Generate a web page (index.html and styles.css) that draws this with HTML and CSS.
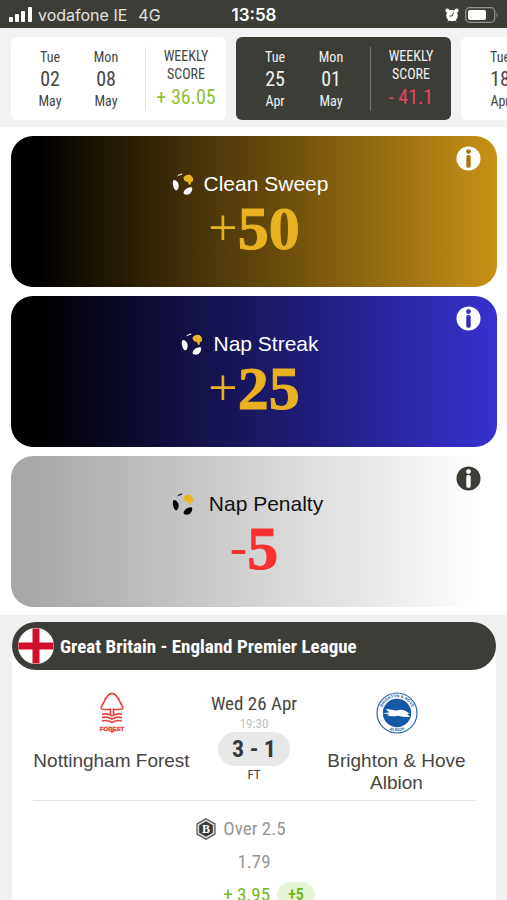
FILE: index.html
```html
<!DOCTYPE html>
<html lang="en">
<head>
<meta charset="utf-8">
<meta name="viewport" content="width=device-width, initial-scale=1">
<title>Weekly scores</title>
<link rel="stylesheet" href="styles.css">
</head>
<body>
<svg class="defs" aria-hidden="true">
  <symbol id="ball" viewBox="0 0 22 24">
    <path class="patch" d="M1.200 8.500C3 6.700 6 9.500 6.600 12.500C7 15.500 5.700 18.500 4 18.500C1.500 17 0 11.500 1.200 8.500Z"/>
    <path class="patch" d="M5 4.500C6.500 2.500 8.500 1.600 10.500 1.600L9.500 3C8 3 6.500 3.700 5 4.500Z"/>
    <path class="patch" d="M13 18C15 15.800 18 14.800 19.800 15.600C21 17 19.700 20.500 17.500 22C15.500 23 12.500 23 11.700 21.500C11.400 20.200 12 19 13 18Z"/>
    <path fill="#eab220" d="M11.700 5.500C12.700 3.200 16.500 2.200 18.800 3.300C21.200 4.700 21.800 8.200 20.600 9.600L18.800 10.200L18.900 12.300L17.300 13L15.800 10C13.300 9.800 11.200 8 11.700 5.500Z"/>
  </symbol>
  <symbol id="info" viewBox="0 0 26 26">
    <circle cx="13" cy="13" r="12.500" fill="currentColor"/>
    <circle class="cut" cx="13" cy="5.800" r="2.500"/>
    <rect class="cut" x="10.700" y="9.300" width="4.600" height="13.400" rx="2"/>
  </symbol>
</svg>
<div class="app">
  <div class="status">
    <div class="carrier">
      <svg class="signal" viewBox="0 0 24 15" aria-hidden="true"><g fill="#fff"><rect x="0" y="10" width="4" height="5" rx="1"/><rect x="6" y="7" width="4" height="8" rx="1"/><rect x="12" y="4" width="4" height="11" rx="1"/><rect x="19" y="0" width="4" height="15" rx="1"/></g></svg>
      <span>vodafone IE</span><span class="net">4G</span>
    </div>
    <time class="clock">13:58</time>
    <div class="power">
      <svg class="alarm" viewBox="0 0 14 14" aria-hidden="true"><g fill="#fff"><circle cx="7" cy="7.500" r="5.800"/><circle cx="2.400" cy="2.600" r="2"/><circle cx="11.600" cy="2.600" r="2"/><path d="M2 14l2-3 1 1zM12 14l-2-3-1 1z"/></g><path d="M8.500 4.500L7 8H4.500" fill="none" stroke="#3d3d38"/></svg>
      <svg class="battery" viewBox="0 0 34 16" aria-hidden="true"><rect x=".7" y=".7" width="29" height="14.600" rx="4" fill="none" stroke="#92928e" stroke-width="1.300"/><rect x="3" y="3" width="18" height="10" rx="2" fill="#fff"/><path d="M31.500 5.500q2 2.500 0 5z" fill="#92928e"/></svg>
    </div>
  </div>

  <nav class="weeks" aria-label="Weeks">
    <button class="week" type="button">
      <span class="day"><span>Tue</span><b>02</b><span>May</span></span>
      <span class="day"><span>Mon</span><b>08</b><span>May</span></span>
      <span class="total"><span>WEEKLY</span><span>SCORE</span><b class="up">+ 36.05</b></span>
    </button>
    <button class="week selected" type="button">
      <span class="day"><span>Tue</span><b>25</b><span>Apr</span></span>
      <span class="day"><span>Mon</span><b>01</b><span>May</span></span>
      <span class="total"><span>WEEKLY</span><span>SCORE</span><b class="down">- 41.1</b></span>
    </button>
    <button class="week" type="button">
      <span class="day"><span>Tue</span><b>18</b><span>Apr</span></span>
    </button>
  </nav>

  <section class="bonuses">
    <article class="bonus sweep">
      <h2><svg class="ball" aria-hidden="true"><use href="#ball"/></svg>Clean Sweep</h2>
      <p><span>+</span>50</p>
      <button class="info" type="button" aria-label="About Clean Sweep"><svg><use href="#info"/></svg></button>
    </article>
    <article class="bonus streak">
      <h2><svg class="ball" aria-hidden="true"><use href="#ball"/></svg>Nap Streak</h2>
      <p><span>+</span>25</p>
      <button class="info" type="button" aria-label="About Nap Streak"><svg><use href="#info"/></svg></button>
    </article>
    <article class="bonus penalty">
      <h2><svg class="ball" aria-hidden="true"><use href="#ball"/></svg>Nap Penalty</h2>
      <p><span>-</span>5</p>
      <button class="info" type="button" aria-label="About Nap Penalty"><svg><use href="#info"/></svg></button>
    </article>
  </section>

  <main class="fixtures">
    <section class="league">
      <h2 class="league-head">
        <svg class="flag" viewBox="0 0 36 36" aria-hidden="true"><circle cx="18" cy="18" r="18" fill="#fff"/><path d="M14.500 0.400h7v14.100h14.100v7H21.500v14.100h-7V21.500H.4v-7h14.100z" fill="#d0112b"/></svg>
        Great Britain - England Premier League
      </h2>
      <div class="match">
        <div class="team">
          <svg class="crest" viewBox="0 0 42 42" aria-hidden="true">
            <g fill="none" stroke="#e8453c" stroke-width="1.700" stroke-linejoin="round">
              <path d="M19 17.500H13C10 17.500 9.500 15.500 11 13.500C12 12 12.500 10.500 13.500 9C14 7 15 5.500 16.500 4.500C17 2.500 19 1.500 21 1.300C23 1.500 25 2.500 25.500 4.500C27 5.500 28 7 28.500 9C29.500 10.500 30 12 31 13.500C32.500 15.500 32 17.500 29 17.500H23"/>
              <path d="M19.500 16.500V22M22.500 16.500V22"/>
              <path d="M11 22.300q5-1.500 10 1.500q5-3 10-1.500M11 25.600q5-1.500 10 1.500q5-3 10-1.500M11 29q5-1.500 10 1.500q5-3 10-1.500"/>
            </g>
            <text x="21" y="38.500" class="crest-name">FOREST</text>
            <path d="M18.500 39h5L21 41z" fill="#e8453c"/>
          </svg>
          <span>Nottingham Forest</span>
        </div>
        <div class="result">
          <span class="date">Wed 26 Apr</span>
          <span class="time">19:30</span>
          <strong class="score">3 - 1</strong>
          <span class="state">FT</span>
        </div>
        <div class="team">
          <svg class="crest" viewBox="0 0 42 42" aria-hidden="true">
            <defs><path id="ring-top" d="M5.200 21a15.800 15.800 0 0 1 31.600 0"/><path id="ring-bottom" d="M2.800 21a18.200 18.200 0 0 0 36.400 0"/></defs>
            <circle cx="21" cy="21" r="20" fill="#fff" stroke="#2a66ae" stroke-width="1.200"/>
            <circle cx="21" cy="21" r="14.200" fill="#1558a8"/>
            <text class="ring"><textPath href="#ring-top" startOffset="50%">BRIGHTON &amp; HOVE</textPath></text>
            <text class="ring"><textPath href="#ring-bottom" startOffset="50%">ALBION</textPath></text>
            <path d="M5.500 21.300L13 20.500C12 19.500 11 18 9.500 16.800C14 17.500 17 18.500 21 18.500C25 17 29 18.300 31.500 20.300L34 21.500L31 22C32 23 33 23.500 34 25C29 25 25 24.500 22 23.700C18 24.500 14 24.500 10.500 23C12 22.800 13 22.500 13.500 22Z" fill="#fff"/>
          </svg>
          <span>Brighton &amp; Hove Albion</span>
        </div>
      </div>
      <div class="pick">
        <span class="market">
          <svg class="badge" viewBox="0 0 20 22" aria-hidden="true"><path d="M10 .8l9 5.100v10.200l-9 5.100-9-5.100V5.900z" fill="#d8d8d6" stroke="#55554f" stroke-width="1.200"/><path d="M10 3.300l6.800 3.900v7.600L10 18.700l-6.800-3.900V7.200z" fill="#3a3a36"/><text x="10" y="15" class="badge-letter">B</text></svg>
          Over 2.5
        </span>
        <span>1.79</span>
        <span class="gain">+ 3.95 <b>+5</b></span>
      </div>
    </section>
  </main>
</div>
</body>
</html>
```
FILE: styles.css
```css
* { box-sizing: border-box; }
body {
  margin: 0;
  background: #f0f0f0;
  color: #464643;
  font-family: "Roboto Condensed", "Liberation Sans Narrow", Roboto, sans-serif;
}
h2, p { margin: 0; font-weight: 400; }
button { font: inherit; color: inherit; border: 0; padding: 0; }
.defs { position: absolute; width: 0; height: 0; }
.app { height: 100vh; overflow: hidden; }

.status {
  display: grid;
  grid-template-columns: 1fr auto 1fr;
  align-items: center;
  height: 28px;
  padding: 1px 8px 0 9px;
  background: #3d3d38;
  color: #e2e2df;
  font-family: Inter, sans-serif;
  font-size: 16px;
}
.carrier { display: flex; align-items: center; gap: 5px; white-space: nowrap; }
.signal { width: 24px; height: 15px; }
.net { margin-left: 6px; }
.clock { font-weight: 600; font-size: 17px; color: #fff; }
.power { display: flex; align-items: center; justify-content: flex-end; gap: 6px; }
.alarm { width: 14px; height: 14px; }
.battery { width: 34px; height: 16px; }

.weeks {
  display: flex;
  gap: 10px;
  padding: 9px 0 7px 11px;
  background: #f2f2f2;
  overflow: hidden;
}
.week {
  flex: 0 0 215px;
  display: flex;
  align-items: center;
  height: 83px;
  padding: 0 0 0 11px;
  border-radius: 6px;
  background: #fff;
  font-size: 14px;
}
.week b { font-weight: 400; }
.day { width: 56px; display: flex; flex-direction: column; align-items: center; line-height: 20px; }
.day b { font-size: 20px; line-height: 24px; }
.total {
  flex: 1;
  display: flex;
  flex-direction: column;
  align-items: center;
  margin-left: 11px;
  border-left: 1px solid #dcdce4;
  line-height: 18px;
}
.total b { font-size: 20px; line-height: 28px; }
.selected { background: #3d3d38; color: #f0f0ee; }
.selected .total { border-color: #777773; }
.up { color: #87c232; }
.down { color: #e8455e; }

.bonuses { display: flex; flex-direction: column; gap: 9px; padding: 9px 10px 8px 11px; background: #fff; }
.bonus {
  position: relative;
  display: flex;
  flex-direction: column;
  align-items: center;
  height: 151px;
  padding-top: 34px;
  border-radius: 22px;
  color: #fff;
}
.bonus h2 {
  display: flex;
  align-items: center;
  gap: 10px;
  padding-right: 8px;
  font: 21px/28px "Liberation Sans", sans-serif;
}
.bonus p {
  display: flex;
  align-items: center;
  color: #eab220;
  font: bold 62px/60px "Liberation Serif", serif;
  -webkit-text-stroke: 1px currentColor;
}
.bonus p span { font-size: 52px; font-weight: 400; -webkit-text-stroke: 0; }
.ball { width: 22px; height: 24px; fill: #fff; }
.sweep { background: linear-gradient(90deg, #000 5%, #c89116); }
.streak { background: linear-gradient(90deg, #000 5%, #3731cf); }
.penalty { background: linear-gradient(90deg, #a8a8a8 5%, #fff 97%); color: #111; }
.penalty .ball { fill: #000; }
.bonus.penalty h2 { gap: 15px; padding-right: 13px; }
.penalty p { color: #fc3030; }
.info { position: absolute; top: 10px; right: 16px; width: 25px; height: 25px; background: none; color: #fff; }
.info svg { display: block; width: 25px; height: 25px; }
.sweep .info { fill: #a9780f; }
.streak .info { fill: #342eb9; }
.penalty .info { color: #3d3d38; fill: #fff; }

.fixtures { padding: 7px 11px 0 12px; }
.league { background: linear-gradient(#f0f0f0 24px, #fff 24px); }
.league-head {
  display: flex;
  align-items: center;
  gap: 6px;
  height: 48px;
  padding-left: 6px;
  border-radius: 24px;
  background: #3d3d38;
  color: #fff;
  font-weight: 700;
  font-size: 19px;
}
.flag { width: 36px; height: 36px; }
.match {
  display: grid;
  grid-template-columns: 1fr 128px 1fr;
  margin: 0 21px;
  padding: 22px 0 6px;
  border-bottom: 1px solid #e4e4e4;
}
.team {
  display: flex;
  flex-direction: column;
  align-items: center;
  gap: 16px;
  font: 19px/22px "Liberation Sans", sans-serif;
  text-align: center;
}
.crest { width: 42px; height: 42px; }
.crest-name { font: 900 6px "Liberation Sans", sans-serif; fill: #e8453c; stroke: #e8453c; stroke-width: .4px; text-anchor: middle; }
.ring { font: 700 4px "Liberation Sans", sans-serif; fill: #1558a8; text-anchor: middle; }
.result { display: flex; flex-direction: column; align-items: center; white-space: nowrap; }
.date { font-size: 19px; line-height: 24px; }
.time { font-size: 13px; line-height: 16px; color: #bdbdbd; }
.score {
  padding: 0 14px;
  border-radius: 17px;
  background: #e8e8e8;
  color: #383835;
  font-size: 24px;
  line-height: 34px;
}
.state { font-size: 13px; line-height: 18px; }
.pick {
  display: flex;
  flex-direction: column;
  align-items: center;
  padding: 11px 0 12px;
  color: #969694;
  font-size: 19px;
  line-height: 33px;
}
.market { display: flex; align-items: center; gap: 7px; margin-right: 26px; }
.badge { width: 20px; height: 22px; }
.badge-letter { font: 700 12px "Liberation Serif", serif; fill: #fff; text-anchor: middle; }
.gain { display: flex; align-items: center; gap: 7px; margin-left: 30px; color: #74b824; }
.gain b { padding: 0 11px; border-radius: 13px; background: #e6f4d8; font-size: 16px; line-height: 26px; }
```
